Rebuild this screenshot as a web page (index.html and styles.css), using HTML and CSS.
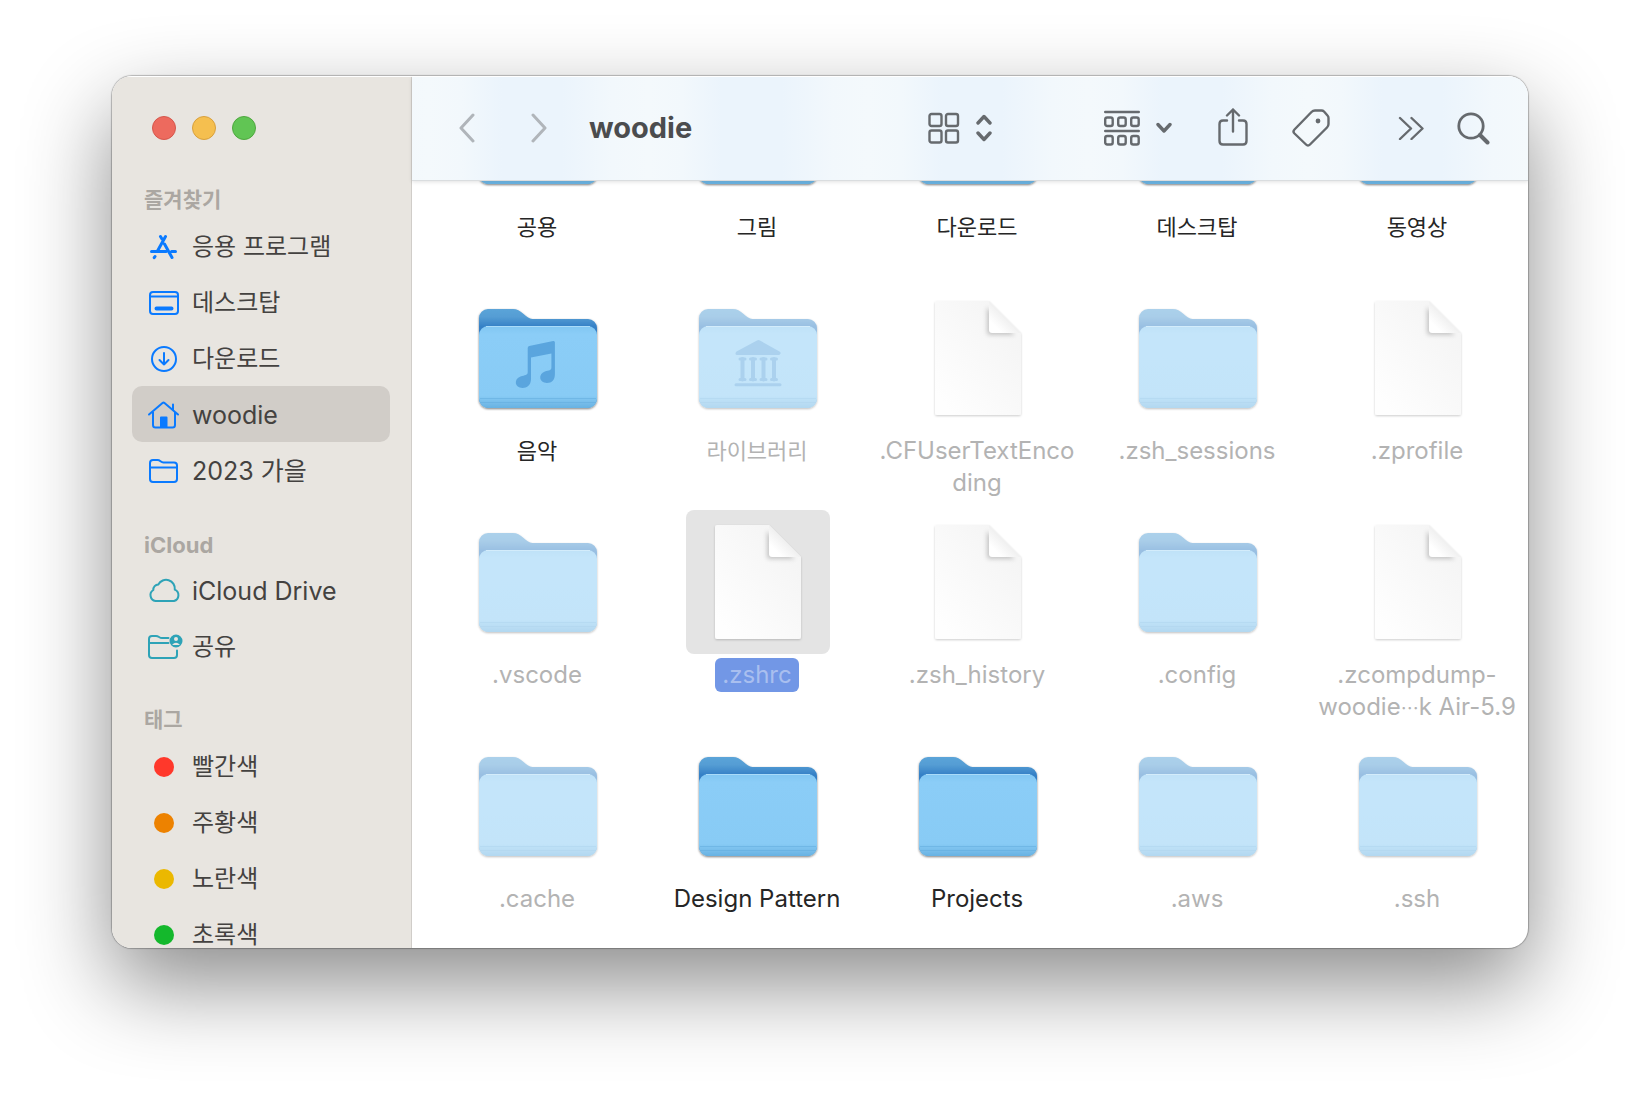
FILE: index.html
```
<!DOCTYPE html>
<html lang="ko">
  <head>
    <meta charset="UTF-8" />
    <meta name="viewport" content="width=device-width, initial-scale=1.0" />
    <title>woodie</title>
    <link rel="stylesheet" href="styles.css">
  </head>
  <body>
    <!-- shared file icons -->
    <svg class="defs" width="0" height="0" aria-hidden="true">
      <defs>
        <linearGradient id="back" x1="0" y1="0" x2="0" y2="1">
          <stop offset="0" stop-color="#5ba4d8" />
          <stop offset="0.08" stop-color="#559dd4" />
          <stop offset="0.18" stop-color="#3580c6" />
          <stop offset="1" stop-color="#3580c6" />
        </linearGradient>
        <linearGradient id="front" x1="0" y1="0" x2="0" y2="1">
          <stop offset="0" stop-color="#80c6f2" />
          <stop offset="0.1" stop-color="#8bcdf7" />
          <stop offset="0.85" stop-color="#88cbf5" />
          <stop offset="1" stop-color="#68b2e2" />
        </linearGradient>
        <linearGradient id="paper" x1="1" y1="0.2" x2="0.2" y2="1">
          <stop offset="0" stop-color="#f4f4f4" />
          <stop offset="1" stop-color="#fefefe" />
        </linearGradient>
        <linearGradient id="fold" x1="1" y1="0" x2="0" y2="1">
          <stop offset="0.5" stop-color="#f0f0f0" />
          <stop offset="0.8" stop-color="#ffffff" />
        </linearGradient>
        <filter id="soft" x="-50%" y="-50%" width="200%" height="200%">
          <feGaussianBlur stdDeviation="2" />
        </filter>
        <filter id="drop" x="-10%" y="-10%" width="120%" height="120%">
          <feDropShadow dx="0" dy="1" stdDeviation="1" flood-color="#000" flood-opacity="0.5" />
        </filter>
        <filter id="dropLight" x="-10%" y="-10%" width="120%" height="120%">
          <feDropShadow dx="0" dy="1" stdDeviation="1" flood-color="#000" flood-opacity="0.2" />
        </filter>
      </defs>
      <symbol id="folder" viewBox="0 0 144 144">
        <g filter="url(#drop)">
          <path fill="url(#back)" d="M13 34v-2a9 9 0 0 1 9-9h25c4 0 7 2 10 4.500l3 2.500c3 2.500 5 3 9 3h53a9 9 0 0 1 9 9v70a10 10 0 0 1-10 10H23a10 10 0 0 1-10-10z" />
          <rect x="13" y="40" width="118" height="82" rx="9" fill="url(#front)" />
        </g>
        <path d="M20 40.500h104" stroke="#a9dbf9" />
        <path d="M14 112.500h116M14 116.500h116" stroke="#5fa9dc" stroke-opacity="0.5" />
      </symbol>
      <symbol id="doc" viewBox="0 0 144 144">
        <path filter="url(#dropLight)" fill="url(#paper)" d="M29 17a2 2 0 0 1 2-2h52l32 32v80a2 2 0 0 1-2 2H31a2 2 0 0 1-2-2z" />
        <path filter="url(#soft)" fill="#000" fill-opacity="0.2" d="M81 21v25a3 3 0 0 0 3 3h25z" />
        <path fill="url(#fold)" d="M83 15v29a3 3 0 0 0 3 3h29z" />
      </symbol>
    </svg>

    <div class="window">
      <aside class="sidebar">
        <div class="lights">
          <button class="light close" aria-label="닫기"></button>
          <button class="light minimize" aria-label="최소화"></button>
          <button class="light zoom" aria-label="확대"></button>
        </div>

        <nav>
          <h2>즐겨찾기</h2>
          <a class="item" href="#">
            <svg class="blue bold" viewBox="0 0 36 36"><path d="M19.500 7.500L11.500 22M14.500 7.500l1.500 2.500M18.500 15l7.500 13.500M5.500 22.500h14.500M25.500 22.500h4M9 27.500l-.8 1.200" /></svg>
            응용 프로그램
          </a>
          <a class="item" href="#">
            <svg class="blue" viewBox="0 0 36 36"><rect x="4" y="7" width="28" height="22" rx="3" /><path d="M4 11.500h28" /><rect class="solid" x="9.500" y="22.500" width="17" height="2" rx="1" /></svg>
            데스크탑
          </a>
          <a class="item" href="#">
            <svg class="blue" viewBox="0 0 36 36"><circle cx="18" cy="18" r="12" /><path d="M18 12v11.500M13.500 19l4.500 4.500 4.500-4.500" /></svg>
            다운로드
          </a>
          <a class="item active" href="#">
            <svg class="blue" viewBox="0 0 36 36"><path d="M3 17.500L16.500 6Q17.500 5.200 18.500 6L32 17.500M7 15v13q0 2.500 2.500 2.500h17q2.500 0 2.500-2.500V15M27 7.500v5" /><path class="solid" d="M15 20.500h5.500v9.500H15z" /></svg>
            <span class="latin">woodie</span>
          </a>
          <a class="item" href="#">
            <svg class="blue" viewBox="0 0 36 36"><path d="M4 26V10q0-3 3-3h4.500q1.500 0 3 1.200T17.500 9.500H28q3 0 3 3V26q0 3-3 3H7q-3 0-3-3zM4 14.500h27" /></svg>
            <span class="latin">2023 가을</span>
          </a>

          <h2 class="latin">iCloud</h2>
          <a class="item" href="#">
            <svg class="teal" viewBox="0 0 36 36"><path d="M9.500 28A6 6 0 0 1 7.300 17a5.200 5.200 0 0 1 5-5.500 8.800 8.800 0 0 1 16.500 5.200A6 6 0 0 1 28 28z" /></svg>
            <span class="latin">iCloud Drive</span>
          </a>
          <a class="item" href="#">
            <svg class="teal" viewBox="0 0 36 36"><path d="M31 21.500V26q0 3-3 3H6q-3 0-3-3V10q0-3 3-3h4q1.500 0 3 1t3 1h6.500M3 14h19.500" /><circle class="solid" cx="30" cy="12" r="5.500" /><circle cx="30" cy="10" r="2" fill="#e8e5e0" stroke="none" /><path d="M26 16q4-4.500 8 0z" fill="#e8e5e0" stroke="none" /></svg>
            공유
          </a>

          <h2>태그</h2>
          <a class="item" href="#"><span class="dot red"></span>빨간색</a>
          <a class="item" href="#"><span class="dot orange"></span>주황색</a>
          <a class="item" href="#"><span class="dot yellow"></span>노란색</a>
          <a class="item" href="#"><span class="dot green"></span>초록색</a>
        </nav>
      </aside>

      <main>
        <header class="toolbar">
          <div class="history">
            <button aria-label="뒤로"><svg width="16" height="30" viewBox="0 0 16 30" stroke-width="3"><path d="M14 2L2 15l12 13" /></svg></button>
            <button aria-label="앞으로"><svg width="16" height="30" viewBox="0 0 16 30" stroke-width="3"><path d="M2 2l12 13L2 28" /></svg></button>
          </div>
          <h1>woodie</h1>
          <div class="views">
            <button aria-label="보기">
              <svg width="32" height="32" viewBox="0 0 32 32" stroke-width="2.400"><rect x="1.500" y="2" width="12" height="12" rx="2" /><rect x="18" y="2" width="12" height="12" rx="2" /><rect x="1.500" y="18.500" width="12" height="12" rx="2" /><rect x="18" y="18.500" width="12" height="12" rx="2" /></svg>
              <svg width="16" height="28" viewBox="0 0 16 28" stroke-width="3.400"><path d="M2 9l6-6.500L14 9M2 19l6 6.500 6-6.500" /></svg>
            </button>
            <button aria-label="그룹">
              <svg width="36" height="36" viewBox="0 0 36 36" stroke-width="2.400"><path d="M1.200 2h33.600M1.200 21h33.600" /><rect x="1.200" y="7.500" width="7.500" height="8.500" rx="2" /><rect x="14.200" y="7.500" width="7.500" height="8.500" rx="2" /><rect x="27.200" y="7.500" width="7.500" height="8.500" rx="2" /><rect x="1.200" y="26" width="7.500" height="8.500" rx="2" /><rect x="14.200" y="26" width="7.500" height="8.500" rx="2" /><rect x="27.200" y="26" width="7.500" height="8.500" rx="2" /></svg>
              <svg width="16" height="12" viewBox="0 0 16 12" stroke-width="3.400"><path d="M2 2.500L8 9l6-6.500" /></svg>
            </button>
          </div>
          <div class="actions">
            <button aria-label="공유"><svg width="30" height="40" viewBox="0 0 30 40" stroke-width="2.400"><path d="M9 12.500H5q-3.500 0-3.500 3.500v17Q1.500 36.500 5 36.500h20q3.500 0 3.500-3.500V16q0-3.500-3.500-3.500h-4M15 23.500V1.500M9 7.500l6-6 6 6" /></svg></button>
            <button aria-label="태그"><svg width="38" height="40" viewBox="0 0 38 40" stroke-width="2.400"><path d="M19.500 4q1.500-1.500 3.500-1.500h6.500q1.500 0 2.500 1l3.500 4q1 1 1 2.500V16q0 2-1.500 3.500L18 36.500q-2 2-4 0L2.500 25.500q-2-2 0-4z" /><circle class="solid" cx="26" cy="13" r="1.200" /></svg></button>
          </div>
          <div class="actions end">
            <button aria-label="더 보기"><svg width="26" height="24" viewBox="0 0 26 24" stroke-width="2.400"><path d="M2 2l11 10.500L2 23M13.500 2l11 10.500-11 10.500" /></svg></button>
            <button aria-label="검색"><svg width="33" height="33" viewBox="0 0 33 33"><circle cx="14" cy="14" r="12.200" stroke-width="2.800" /><path d="M23 23l7.500 7.500" stroke-width="4" /></svg></button>
          </div>
        </header>

        <div class="files">
          <ul>
            <li><svg><use href="#folder" /></svg><span class="name">공용</span></li>
            <li><svg><use href="#folder" /></svg><span class="name">그림</span></li>
            <li><svg><use href="#folder" /></svg><span class="name">다운로드</span></li>
            <li><svg><use href="#folder" /></svg><span class="name">데스크탑</span></li>
            <li><svg><use href="#folder" /></svg><span class="name">동영상</span></li>

            <li>
              <svg viewBox="0 0 144 144"><use href="#folder" /><path fill="#5aa5de" d="M61.700 62q0-1.500 1.500-2l24-5q1.700-.3 1.700 1.500V88c0 6-3 9-8 9-8 0-9-9-2-11.500 4-1.200 6.500-1 6.500-4V67.500L65 71.500V93c0 6-4 9-8.500 9-8 0-9-9-2-11.500 4.500-1.500 7.200-1 7.200-4.500z" /></svg>
              <span class="name">음악</span>
            </li>
            <li class="hidden">
              <svg viewBox="0 0 144 144"><use href="#folder" /><path fill="#5aa5de" d="M71 54.500q1.500-.8 3 0l19.500 11q1.500 1 1 2T93 69H51q-1.500 0-1.500-1.200t1-2.300z" /><g stroke="#5aa5de" stroke-width="3" stroke-linecap="round"><path d="M50 98.700h44" /><path d="M54 73h5M64.500 73h5M75 73h5M85.500 73h5M54 93.500h5M64.500 93.500h5M75 93.500h5M85.500 93.500h5" /><path stroke-width="4" d="M56.500 73v20.500M67 73v20.500M77.500 73v20.500M88 73v20.500" /></g></svg>
              <span class="name">라이브러리</span>
            </li>
            <li class="hidden"><svg class="doc"><use href="#doc" /></svg><span class="name latin">.CFUserTextEnco<br>ding</span></li>
            <li class="hidden"><svg><use href="#folder" /></svg><span class="name latin">.zsh_sessions</span></li>
            <li class="hidden"><svg class="doc"><use href="#doc" /></svg><span class="name latin">.zprofile</span></li>

            <li class="hidden"><svg><use href="#folder" /></svg><span class="name latin">.vscode</span></li>
            <li class="hidden selected"><svg class="doc"><use href="#doc" /></svg><span class="name latin">.zshrc</span></li>
            <li class="hidden"><svg class="doc"><use href="#doc" /></svg><span class="name latin">.zsh_history</span></li>
            <li class="hidden"><svg><use href="#folder" /></svg><span class="name latin">.config</span></li>
            <li class="hidden"><svg class="doc"><use href="#doc" /></svg><span class="name latin">.zcompdump-<br>woodie<span class="dots">…</span>k Air-5.9</span></li>

            <li class="hidden"><svg><use href="#folder" /></svg><span class="name latin">.cache</span></li>
            <li><svg><use href="#folder" /></svg><span class="name latin">Design Pattern</span></li>
            <li><svg><use href="#folder" /></svg><span class="name latin">Projects</span></li>
            <li class="hidden"><svg><use href="#folder" /></svg><span class="name latin">.aws</span></li>
            <li class="hidden"><svg><use href="#folder" /></svg><span class="name latin">.ssh</span></li>
          </ul>
        </div>
      </main>
    </div>
  </body>
</html>
```
FILE: styles.css
```
* {
  margin: 0;
  padding: 0;
  box-sizing: border-box;
}

body {
  font-family: Inter, "Noto Sans CJK KR", sans-serif;
  background: #fff;
  min-height: 100vh;
  padding: 76px 112px 148px;
  overflow: hidden;
}

button {
  background: none;
  border: none;
  color: inherit;
}

.defs {
  position: absolute;
}

.window {
  display: flex;
  height: calc(100vh - 224px);
  border-radius: 20px;
  overflow: hidden;
  background: #fff;
  box-shadow: 0 0 1px 1px rgba(0, 0, 0, 0.25), 0 36px 88px rgba(0, 0, 0, 0.46);
}

/* sidebar */
.sidebar {
  width: 300px;
  flex-shrink: 0;
  padding: 40px 22px 0 20px;
  background: #e8e5e0;
  box-shadow: inset 0 1px 0 #fff, inset -1px 0 0 #d0cdc9;
  overflow: hidden;
}

.lights {
  display: flex;
  gap: 16px;
  padding-left: 20px;
  margin-bottom: 42px;
}

.light {
  width: 24px;
  height: 24px;
  border-radius: 50%;
}

.close {
  background: #ed6a5e;
  border: 1px solid #d5574c;
}

.minimize {
  background: #f5bf4f;
  border: 1px solid #d8a03d;
}

.zoom {
  background: #61c554;
  border: 1px solid #4fa73f;
}

.sidebar h2 {
  height: 36px;
  padding-left: 12px;
  font-size: 21px;
  line-height: 36px;
  font-weight: 700;
  color: #aba7a2;
}

.sidebar h2.latin {
  font-size: 22px;
  line-height: 38px;
}

.item + h2 {
  margin-top: 28px;
}

.item {
  display: flex;
  align-items: center;
  height: 56px;
  padding: 2px 0 0 14px;
  border-radius: 10px;
  font-size: 24px;
  line-height: 32px;
  color: #444240;
  text-decoration: none;
  white-space: nowrap;
}

.item .latin {
  font-size: 25px;
}

.item.active {
  background: #d1cdc8;
}

.item svg {
  width: 36px;
  height: 36px;
  margin-right: 10px;
  flex-shrink: 0;
  overflow: visible;
}

.blue {
  color: #0a7aff;
}

.teal {
  color: #2ea3b7;
}

.dot {
  width: 20px;
  height: 20px;
  margin: 0 18px 0 8px;
  border-radius: 50%;
}

.red {
  background: #ff382b;
}

.orange {
  background: #ed8200;
}

.yellow {
  background: #ebb800;
}

.green {
  background: #14b82c;
}

.item svg,
.toolbar svg {
  fill: none;
  stroke: currentColor;
  stroke-linecap: round;
  stroke-linejoin: round;
}

.item svg {
  stroke-width: 2;
}

.item svg.bold {
  stroke-width: 3;
}

.solid {
  fill: currentColor;
}

/* toolbar */
main {
  flex: 1;
  min-width: 0;
  display: flex;
  flex-direction: column;
}

.toolbar {
  position: relative;
  display: flex;
  align-items: center;
  height: 104px;
  flex-shrink: 0;
  padding: 0 38px 0 47px;
  color: #666a6e;
  background: repeating-linear-gradient(90deg, #f4f9fc 16px, #f2f8fc 50px, #ebf4fc 90px, #ebf4fc 150px, #f2f8fc 200px, #f4f9fc 236px);
  box-shadow: inset 0 1px 0 #fff, 0 1px 0 #dadddf, 0 2px 4px rgba(0, 0, 0, 0.12);
}

.toolbar div,
.toolbar button {
  display: flex;
  align-items: center;
}

.toolbar .history {
  gap: 56px;
  color: #b0b5ba;
}

.toolbar h1 {
  flex: 1;
  margin-left: 42px;
  font-size: 29px;
  line-height: 40px;
  font-weight: 700;
  color: #4b4c4e;
}

.toolbar .views {
  gap: 112px;
}

.toolbar .views button {
  gap: 16px;
}

.toolbar .actions {
  gap: 44px;
  margin-left: 46px;
}

.toolbar .end {
  gap: 33px;
  margin-left: 68px;
}

/* icon view, scrolled part of the way down the first row */
.files {
  flex: 1;
  min-height: 0;
  overflow: hidden;
  padding-left: 16px;
}

.files ul {
  display: grid;
  grid-template-columns: repeat(5, 1fr);
  grid-auto-rows: 224px;
  margin-top: -118px;
  list-style: none;
}

.files li {
  display: flex;
  flex-direction: column;
  align-items: center;
}

.files svg {
  width: 144px;
  height: 144px;
  border-radius: 8px;
  flex-shrink: 0;
}

.name {
  margin: 4px 2px 0 0;
  padding: 1px 7px;
  border-radius: 6px;
  font-size: 22px;
  line-height: 32px;
  text-align: center;
  white-space: nowrap;
  color: #262626;
}

.name.latin {
  font-size: 24px;
}

.dots {
  font-family: "Noto Sans CJK KR", sans-serif;
  font-size: 18px;
  line-height: 18px;
}

.hidden svg {
  opacity: 0.5;
}

.hidden svg.doc {
  opacity: 1;
}

.hidden .name {
  color: #b3b3b3;
}

.selected svg {
  background: #e4e4e4;
}

.selected .name {
  background: #7297e6;
  color: #a9bfef;
}
```
